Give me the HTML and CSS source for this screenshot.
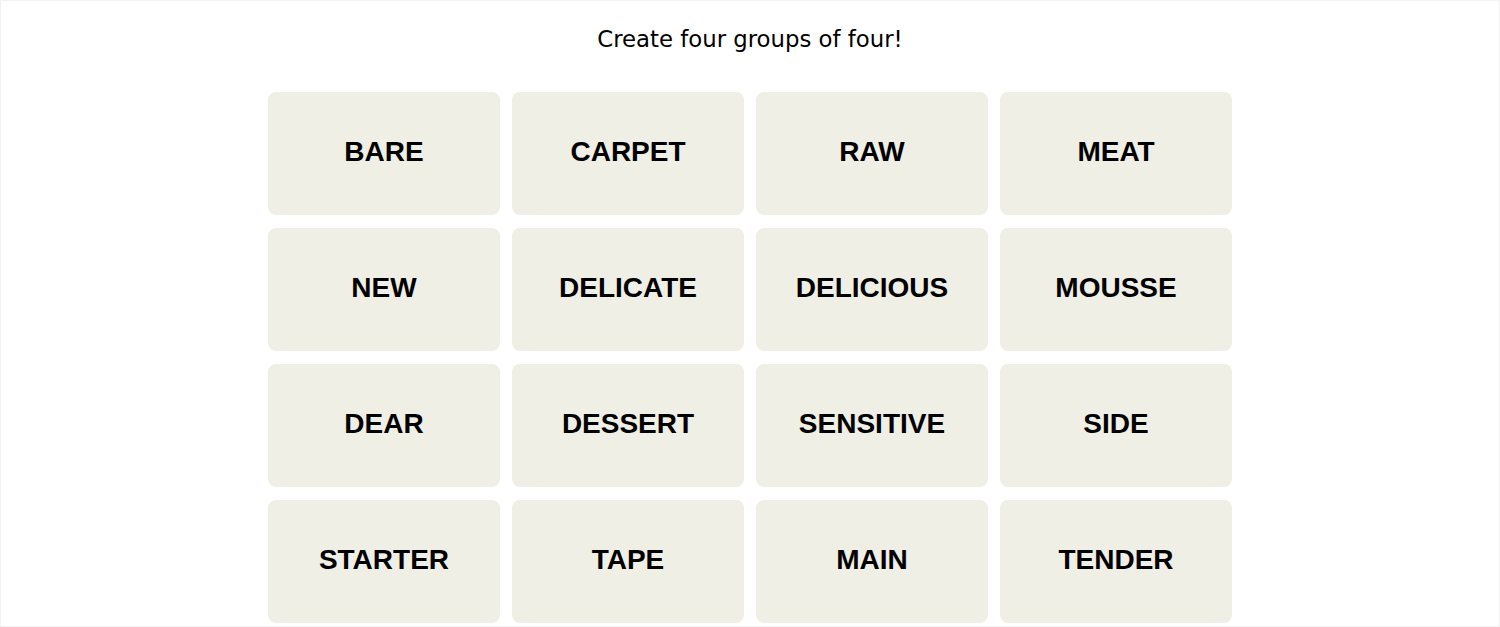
FILE: index.html
```html
<!DOCTYPE html>
<html lang="en">
<head>
<meta charset="utf-8">
<title>Connections</title>
<link rel="stylesheet" href="styles.css">
</head>
<body>
<div class="page">
  <p class="prompt">Create four groups of four!</p>
  <div class="board">
    <button class="tile">BARE</button>
    <button class="tile">CARPET</button>
    <button class="tile">RAW</button>
    <button class="tile">MEAT</button>
    <button class="tile">NEW</button>
    <button class="tile">DELICATE</button>
    <button class="tile">DELICIOUS</button>
    <button class="tile">MOUSSE</button>
    <button class="tile">DEAR</button>
    <button class="tile">DESSERT</button>
    <button class="tile">SENSITIVE</button>
    <button class="tile">SIDE</button>
    <button class="tile">STARTER</button>
    <button class="tile">TAPE</button>
    <button class="tile">MAIN</button>
    <button class="tile">TENDER</button>
  </div>
</div>
</body>
</html>
```
FILE: styles.css
```css
html, body {
  margin: 0;
  padding: 0;
  background: #ffffff;
}

.page {
  box-sizing: border-box;
  width: 1500px;
  height: 627px;
  border: 1px solid #f2f2f2;
  display: flex;
  flex-direction: column;
  align-items: center;
  overflow: hidden;
}

.prompt {
  margin: 0;
  padding-top: 23px;
  font-family: "DejaVu Sans", "Liberation Sans", sans-serif;
  font-size: 22.8px;
  line-height: 30px;
  color: #000;
  height: 69px;
  box-sizing: border-box;
}

.board {
  width: 963.5px;
  display: grid;
  grid-template-columns: repeat(4, 1fr);
  grid-auto-rows: 122.5px;
  column-gap: 12.5px;
  row-gap: 13.5px;
  margin-top: 22px;
}

.tile {
  border: none;
  border-radius: 8px;
  background: #efefe6;
  color: #000;
  font-family: "Liberation Sans", Arial, sans-serif;
  font-weight: 700;
  font-size: 28px;
  padding: 0;
  padding-bottom: 3px;
  display: flex;
  align-items: center;
  justify-content: center;
  cursor: pointer;
}
```
